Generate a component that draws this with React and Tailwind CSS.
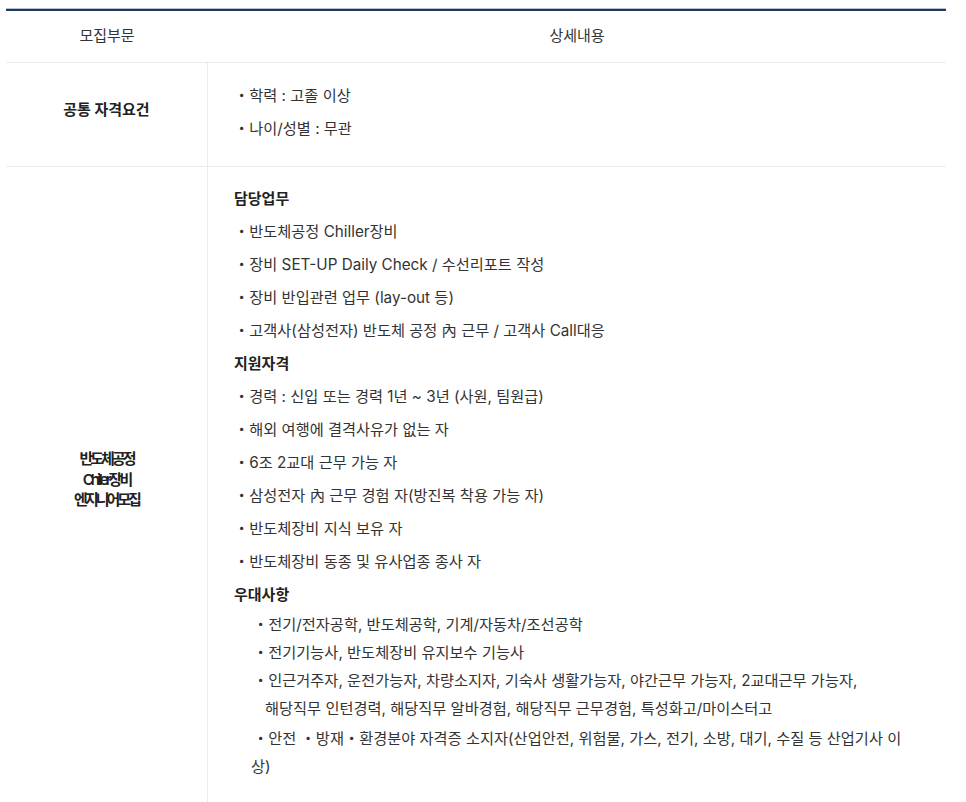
import React from "react";

const duties = [
  "반도체공정 Chiller장비",
  "장비 SET-UP Daily Check / 수선리포트 작성",
  "장비 반입관련 업무 (lay-out 등)",
  "고객사(삼성전자) 반도체 공정 內 근무 / 고객사 Call대응",
];

const quals = [
  "경력 : 신입 또는 경력 1년 ~ 3년 (사원, 팀원급)",
  "해외 여행에 결격사유가 없는 자",
  "6조 2교대 근무 가능 자",
  "삼성전자 內 근무 경험 자(방진복 착용 가능 자)",
  "반도체장비 지식 보유 자",
  "반도체장비 동종 및 유사업종 종사 자",
];

const Bullet = ({ children }) => (
  <div className="h-[33px] leading-[33px] whitespace-nowrap">・{children}</div>
);

const Heading = ({ children }) => (
  <div className="h-[33px] leading-[33px] text-[15px] font-bold text-[#222]">{children}</div>
);

export default function App() {
  return (
    <div className="min-h-screen bg-white pt-[8px] font-['Inter','Noto_Sans_CJK_KR',sans-serif] text-[#333]">
      <div className="ml-[6px] w-[940px]">
        {/* 상단 라인 */}
        <div className="h-px bg-[#b4c0cf]" />
        <div className="h-[2px] bg-[#1c3962]" />

        {/* 헤더 */}
        <div className="grid grid-cols-[202px_1fr] h-[52px] items-center border-b border-[#ebebeb] text-[15px]">
          <div className="text-center">모집부문</div>
          <div className="text-center">상세내용</div>
        </div>

        {/* 공통 자격요건 */}
        <div className="grid grid-cols-[202px_1fr] border-b border-[#ebebeb] text-[15.25px]">
          <div className="flex items-center justify-center border-r border-[#ebebeb] pb-[8px] text-[15px] font-bold text-[#222]">
            공통 자격요건
          </div>
          <div className="pl-[26px] pt-[16px] pb-[21px]">
            <Bullet>학력 : 고졸 이상</Bullet>
            <Bullet>나이/성별 : 무관</Bullet>
          </div>
        </div>

        {/* 반도체공정 */}
        <div className="grid grid-cols-[202px_1fr] border-b border-[#ebebeb] text-[15.25px]">
          <div className="flex items-center justify-center border-r border-[#ebebeb] pb-[10px]">
            <div className="text-center text-[15px] font-semibold leading-[20.5px] tracking-[-3px] text-[#222]">
              반도체공정
              <br />
              Chiller장비
              <br />
              엔지니어모집
            </div>
          </div>
          <div className="pl-[26px] pt-[15px] pb-[22px]">
            <Heading>담당업무</Heading>
            {duties.map((d) => (
              <Bullet key={d}>{d}</Bullet>
            ))}
            <Heading>지원자격</Heading>
            {quals.map((q) => (
              <Bullet key={q}>{q}</Bullet>
            ))}
            <Heading>우대사항</Heading>
            <div className="leading-[28px] whitespace-nowrap">
              <div className="ml-[19px]">・전기/전자공학, 반도체공학, 기계/자동차/조선공학</div>
              <div className="ml-[19px]">・전기기능사, 반도체장비 유지보수 기능사</div>
              <div className="ml-[19px]">
                ・인근거주자, 운전가능자, 차량소지자, 기숙사 생활가능자, 야간근무 가능자, 2교대근무 가능자,
              </div>
              <div className="ml-[31px]">
                해당직무 인턴경력, 해당직무 알바경험, 해당직무 근무경험, 특성화고/마이스터고
              </div>
              <div className="ml-[19px] mt-[2px]">
                ・안전 ・방재・환경분야 자격증 소지자(산업안전, 위험물, 가스, 전기, 소방, 대기, 수질 등 산업기사 이
              </div>
              <div className="ml-[17px]">상)</div>
            </div>
          </div>
        </div>
      </div>
    </div>
  );
}
